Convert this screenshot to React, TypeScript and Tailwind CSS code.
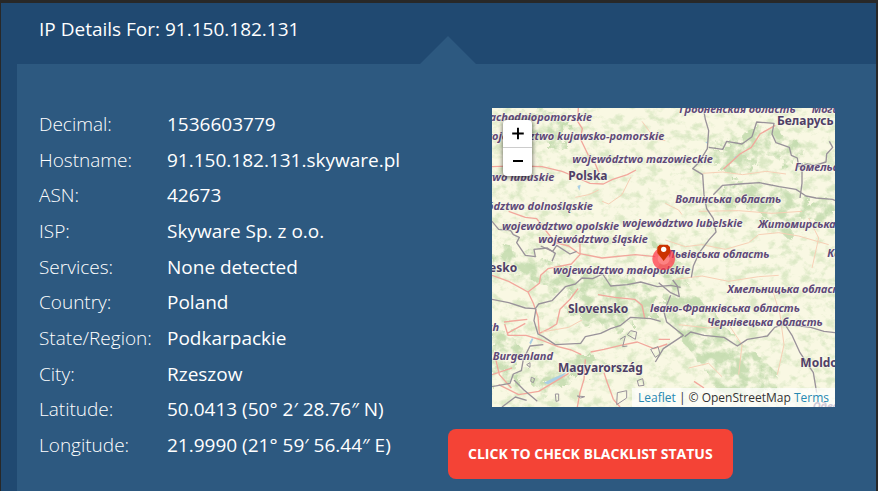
type Point = [number, number];

const DETAILS = [
  ["Decimal:", "1536603779"],
  ["Hostname:", "91.150.182.131.skyware.pl"],
  ["ASN:", "42673"],
  ["ISP:", "Skyware Sp. z o.o."],
  ["Services:", "None detected"],
  ["Country:", "Poland"],
  ["State/Region:", "Podkarpackie"],
  ["City:", "Rzeszow"],
  ["Latitude:", "50.0413 (50° 2′ 28.76″ N)"],
  ["Longitude:", "21.9990 (21° 59′ 56.44″ E)"],
];

const REGIONS: { text: string; at: Point }[] = [
  { text: "województwo zachodniopomorskie", at: [-244, 24] },
  { text: "województwo kujawsko-pomorskie", at: [-26, 82] },
  { text: "województwo mazowieckie", at: [241, 150] },
  { text: "województwo lubuskie", at: [-166, 205] },
  { text: "województwo dolnośląskie", at: [-114, 293] },
  { text: "województwo opolskie", at: [30, 352] },
  { text: "województwo lubelskie", at: [391, 342] },
  { text: "województwo śląskie", at: [139, 391] },
  { text: "Львівська область", at: [526, 435] },
  { text: "województwo małopolskie", at: [183, 483] },
  { text: "Гродненская область", at: [562, 2] },
  { text: "Могилёвская", at: [959, 0] },
  { text: "Гомельская", at: [908, 175] },
  { text: "Волинська область", at: [550, 270] },
  { text: "Житомирська", at: [798, 346] },
  { text: "Київська", at: [1006, 433] },
  { text: "Хмельницька область", at: [706, 540] },
  { text: "Івано-Франківська область", at: [474, 599] },
  { text: "Чернівецька область", at: [645, 641] },
  { text: "Burgenland", at: [2, 741] },
  { text: "Österreich", at: [-142, 656] },
  { text: "Одеська", at: [962, 892] },
];

const COUNTRIES: { text: string; at: Point }[] = [
  { text: "Polska", at: [229, 202] },
  { text: "Беларусь", at: [855, 37] },
  { text: "Slovensko", at: [228, 600] },
  { text: "Magyarország", at: [198, 777] },
  { text: "Česko", at: [-32, 479] },
  { text: "Moldova", at: [925, 764] },
];

function MapDrawing() {
  return (
    <svg
      viewBox="0 0 1029 897"
      preserveAspectRatio="xMidYMid slice"
      className="block h-full w-full"
      role="img"
      aria-label="Map centred on Rzeszow, Poland"
    >
      <defs>
        <filter id="woods" x="0" y="0" width="100%" height="100%" colorInterpolationFilters="sRGB">
          <feTurbulence type="fractalNoise" baseFrequency="0.03 0.04" numOctaves="5" seed="8" />
          <feColorMatrix values="0 0 0 0 0.76  0 0 0 0 0.86  0 0 0 0 0.67  0 4 0 0 -1.9" />
        </filter>
        <filter id="forest" x="-10%" y="-10%" width="120%" height="120%" colorInterpolationFilters="sRGB">
          <feTurbulence type="fractalNoise" baseFrequency="0.03" numOctaves="5" seed="3" result="noise" />
          <feDisplacementMap in="SourceGraphic" in2="noise" scale="90" result="edge" />
          <feColorMatrix in="noise" values="0 0 0 0 0  0 0 0 0 0  0 0 0 0 0  0 4 0 0 -1.5" result="mask" />
          <feComposite in="edge" in2="mask" operator="in" />
        </filter>
      </defs>

      <rect width="1029" height="897" fill="#f9f8e3" />
      <rect width="1029" height="897" filter="url(#woods)" opacity="0.5" />
      <g filter="url(#forest)" fill="#c3dbae" opacity="0.85">
        <path d="M690 240l90-25 80 20 60 30 109 10v70l-90-10-60 50-60-60-70-30-60 20z" />
        <path d="M650 120l80-30 90-50 60 40 70 40-40 50-90-20-90 40-60-10z" />
        <path d="M500 420l70 40 30 100 70 50 50 70 80 60 60 60-20 60-90 40-80-60-40-70-50-60-60-90z" />
        <path d="M230 530l80-40 130 20 60 60-10 60-120 30-100-20-60-40z" />
        <path d="M0 680l70-20 20 100-30 60-60 20z" />
        <path d="M10 410l120 30 100 40 50 30-80 40-90-40-100-20z" />
        <path d="M120 830l70-60 100-30 60 20-100 50-100 60z" />
        <path d="M40 40l110-30 90 40-30 60-120-10z" />
      </g>

      <g fill="#a9cfe5">
        <path d="M155 824l30-14 40-18-18 18-40 19z" />
        <path d="M112 704l8-14 4 4-8 16zM256 234l10-4-4 18zM726 148l8-5-2 10zM640 103l8-3-1 8z" />
      </g>

      {/* roads */}
      <g fill="none" stroke="#f2a79c" strokeWidth="4" strokeLinejoin="round">
        <path d="M259 0l-2 40 14 22-6 30 24 50 20 24 12 28" />
        <path d="M0 176l60-2 90 2 60 14 34 14 50 22 40 2 28-14 44-14 26-14" />
        <path d="M50 310l50 18 34 4 26 34 30 38 40 10 30 22 70 14 100-10 60 6" />
        <path d="M0 502l50 18 58 32 16 34 14 40 4 50 30-14 22-14 10-44 30-30 24-32" />
        <path d="M108 552l34-26 4-24 22-20 70-14 26-28 0-34M36 642l70-8M46 676l54-30M38 648l10 34 54 0 46 14 50 20 40 10 30 14" />
        <path d="M318 560l50 8 60 6 22 18 8 38" />
        <path d="M296 732l40-8 50-12 50-10 50 20 40-14M280 754l-4 60-12 40-8 43M336 794l10 30 18 50 20 23" />
        <path d="M8 740l14 60 36 40M0 800l60-20M20 830l60 30 60-10 40-24 50-30" />
        <path d="M694 184l50-46 34-20 26-40 46-26" />
        <path d="M534 694l-34 0M606 820l30 20" />
      </g>
      <g fill="none" stroke="#f7d0b6" strokeWidth="3" strokeLinejoin="round">
        <path d="M632 196l60-4 60 8 70-10 60 8" />
        <path d="M330 280l20 8 40-28 26-52M250 268l40-8 30-14M450 40l40 54 30 4" />
        <path d="M520 396l60 20 50-6 70 14 70-20 30-24 60-6 60 10 90 26" />
        <path d="M550 514l80-10 80 16 90-14 60-4M620 310l120-2 100 8 90-6M520 286l40 20 10 14" />
        <path d="M560 650l90 10 60-10 40 60-10 90M840 540l24 80 12 90-20 90" />
        <path d="M150 672l80-14 40-22M590 780l60-14 40 40M950 330l30 60-20 90" />
      </g>

      {/* borders */}
      <g fill="none" stroke="#99929a" strokeWidth="4" strokeLinejoin="round">
        <path d="M634 0l6 34 10 34-4 54-24 40-20 20 30 18 4 60 8 42 20 30 8 40-20 22-30 40-18 40-6 34" />
        <path d="M650 118l42 6 12-24 46 8 30-22 14-44 52 4-6 32 12 26 40 14 6 24 18 8 4 26 26-8 22 4 34-10 2-24 18-20-10-18" />
        <path d="M664 260l28-28 50-4 60-4 60 12 50 8 30 20 30 6 50 4 30 14M930 166l0 60-6 44" />
        <path d="M0 340l20 24 36 4 8 12 18 8-8 16 26 38 30 4-4-22 40-4 24 16-10 24" />
        <path d="M0 574l50 10 50 16 30 2 10-14 40-10 40-42 30-8 20-18 32 2 30-14 24 36 50-4 40-8 50 14 40-4 30 6" />
        <path d="M146 414l36 16 12-18 40 26 20-8M132 602l-6 36 12 40 16 8 36 24 76-4 14-20 46-10 30-14 30-10 30-24 60 4 30 8" />
        <path d="M500 524l36 30 26 12-6-32-14-18M536 562l-20 50 8 30 50 40-60 40-24 40" />
        <path d="M578 686l18-14 40 10 60 6 40 26 30-20 60-10 22-26 30-10 22 34 24 52 40 60 10 60" />
        <path d="M866 650l40 2 50 6 40 12 33 4" />
        <path d="M0 836l54-10 10-28 24-10 6-34 20-40 40-4M30 897l40-30 34 10M66 816l30 30 40 34" />
      </g>
      <g fill="none" stroke="#99929a" strokeWidth="3" strokeLinejoin="round">
        <path d="M384 694l16-10-8 32 14-2M406 680l10-12 18 4-4 22zM476 724l22-8 6 22-14 10zM104 770l10-6 0 14z" />
        <path d="M118 808l10 4-4 12-8-4zM190 858l10 0 0 20-8 2zM256 864l22 2-12 4zM376 854l28-6 0 22-30 20zM436 818l16-6 4 20-16 2z" />
      </g>

      <g
        fill="#5f4a78"
        stroke="#fbfaf0"
        strokeWidth="5"
        strokeLinejoin="round"
        strokeOpacity="0.6"
        paintOrder="stroke"
        dominantBaseline="central"
        className="font-['Noto_Sans','Open_Sans',sans-serif] font-bold"
      >
        <g fontStyle="italic" fontSize="33">
          {REGIONS.map(({ text, at }) => (
            <text key={text} x={at[0]} y={at[1]}>
              {text}
            </text>
          ))}
        </g>
        <g fontSize="36" fill="#4f3f66">
          {COUNTRIES.map(({ text, at }) => (
            <text key={text} x={at[0]} y={at[1]}>
              {text}
            </text>
          ))}
        </g>
      </g>

      <circle cx="515" cy="452" r="34" fill="#ff3344" fillOpacity="0.72" />
      <circle cx="515" cy="452" r="18" fill="#ff8a8a" fillOpacity="0.8" />
      <path d="M503 410h24l7 7v18l-19 24-19-24v-18z" fill="#cc3300" />
      <circle cx="515" cy="424" r="8" fill="#fff" />
    </svg>
  );
}

function LocationMap() {
  return (
    <div className="relative ml-11 mr-[41px] h-[299px] overflow-hidden">
      <MapDrawing />
      <div className="absolute left-[11px] top-3 flex flex-col divide-y divide-[#ccc] overflow-hidden rounded bg-white shadow-[0_1px_5px_rgba(0,0,0,0.65)]">
        <ZoomButton label="Zoom in" path="M9 14h12M15 8v12" />
        <ZoomButton label="Zoom out" path="M10 13h10" />
      </div>
      <div className="absolute bottom-0 right-0 bg-white/70 px-1.5 text-[12px] leading-[19px] text-[#333]">
        <a href="#leaflet" className="text-[#2688b2]">
          Leaflet
        </a>{" "}
        | © OpenStreetMap{" "}
        <a href="#terms" className="text-[#2688b2]">
          Terms
        </a>
      </div>
    </div>
  );
}

function ZoomButton({ label, path }: { label: string; path: string }) {
  return (
    <button type="button" aria-label={label} className="h-[28px] w-[29px] cursor-pointer">
      <svg viewBox="0 0 29 28" className="h-full w-full" fill="none" stroke="#000" strokeWidth="2">
        <path d={path} />
      </svg>
    </button>
  );
}

export default function App() {
  return (
    <div className="min-h-screen bg-[#282828] pl-px pr-0.5 pt-[3px] font-['Open_Sans','Noto_Sans',sans-serif]">
      <main className="flex min-h-[calc(100vh-3px)] flex-col bg-[#204971] pl-4 text-white">
        <h1 className="px-[22px] pb-[22px] pt-[13px] text-[19px] leading-[26px]">
          IP Details For: 91.150.182.131
        </h1>

        <section className="grow bg-[#2d5980] pb-3 pl-[3px]">
          <div className="relative grid grid-cols-2 pt-11">
            <span
              aria-hidden="true"
              className="absolute bottom-full left-1/2 h-7 w-14 -translate-x-1/2 bg-[#2d5980] [clip-path:polygon(50%_0,100%_100%,0_100%)]"
            />
            <dl className="flex flex-col justify-between pb-[18px] pl-[19px] text-[19px] leading-[32px]">
              {DETAILS.map(([label, value]) => (
                <div key={label} className="flex">
                  <dt className="w-32 shrink-0 font-light">{label}</dt>
                  <dd className="whitespace-nowrap">{value}</dd>
                </div>
              ))}
            </dl>

            <div>
              <LocationMap />
              <button
                type="button"
                className="mt-[22px] cursor-pointer rounded-lg bg-[#f44336] px-5 py-[14px] text-[14px] font-bold uppercase leading-[22px]"
              >
                Click to check blacklist status
              </button>
            </div>
          </div>
        </section>
      </main>
    </div>
  );
}
